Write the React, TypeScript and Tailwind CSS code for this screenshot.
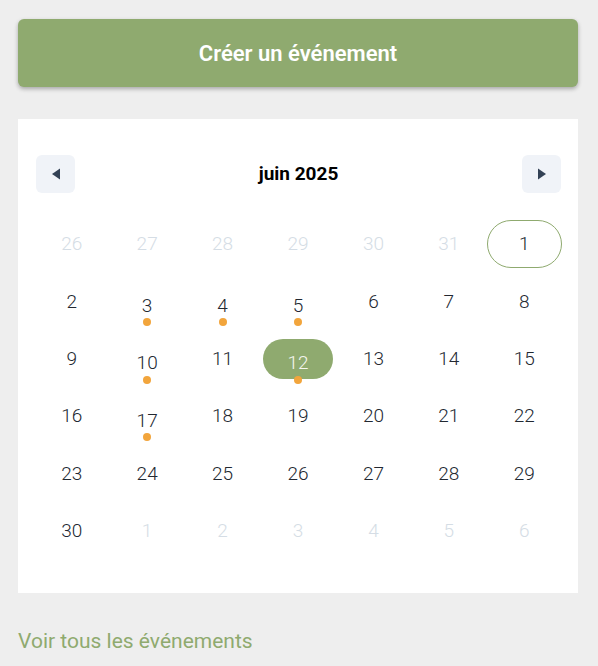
import React from "react";

type Day = { n: number; muted?: boolean; event?: boolean; today?: boolean; selected?: boolean };

const weeks: Day[][] = [
  [
    { n: 26, muted: true },
    { n: 27, muted: true },
    { n: 28, muted: true },
    { n: 29, muted: true },
    { n: 30, muted: true },
    { n: 31, muted: true },
    { n: 1, today: true },
  ],
  [{ n: 2 }, { n: 3, event: true }, { n: 4, event: true }, { n: 5, event: true }, { n: 6 }, { n: 7 }, { n: 8 }],
  [{ n: 9 }, { n: 10, event: true }, { n: 11 }, { n: 12, event: true, selected: true }, { n: 13 }, { n: 14 }, { n: 15 }],
  [{ n: 16 }, { n: 17, event: true }, { n: 18 }, { n: 19 }, { n: 20 }, { n: 21 }, { n: 22 }],
  [{ n: 23 }, { n: 24 }, { n: 25 }, { n: 26 }, { n: 27 }, { n: 28 }, { n: 29 }],
  [
    { n: 30 },
    { n: 1, muted: true },
    { n: 2, muted: true },
    { n: 3, muted: true },
    { n: 4, muted: true },
    { n: 5, muted: true },
    { n: 6, muted: true },
  ],
];

function DayCell({ d }: { d: Day }) {
  const color = d.muted ? "text-[#d5dde5]" : d.selected ? "text-[#f4f6ee]" : "text-[#222831]";
  return (
    <div className="relative flex h-[57.4px] items-center justify-center">
      {d.today && <div className="absolute inset-x-0 top-[4.6px] h-[48px] rounded-full border border-[#8faa6f]" />}
      {d.selected && <div className="absolute left-[3px] right-[3px] top-[9px] h-[40px] rounded-full bg-[#8faa6f]" />}
      <span className={`relative text-[19px] font-light leading-none ${color} ${d.event ? "pt-[9px]" : ""}`}>{d.n}</span>
      {d.event && <span className="absolute left-1/2 top-[46px] h-[8px] w-[8px] -translate-x-1/2 rounded-full bg-[#f2a53c]" />}
    </div>
  );
}

function NavButton({ dir }: { dir: "prev" | "next" }) {
  return (
    <button className="flex h-[38px] w-[39px] items-center justify-center rounded-md bg-[#f0f3f8]">
      <svg width="10" height="12" viewBox="0 0 10 12">
        {dir === "prev" ? <path d="M9 0.5 L1 6 L9 11.5 Z" fill="#334155" /> : <path d="M1 0.5 L9 6 L1 11.5 Z" fill="#334155" />}
      </svg>
    </button>
  );
}

export default function App() {
  return (
    <div className="min-h-[666px] bg-[#eeeeee] pl-[18px] pr-[20px] pt-[19px]" style={{ fontFamily: "Roboto, 'Liberation Sans', sans-serif" }}>
      <button className="flex h-[68px] w-full items-center justify-center rounded-md bg-[#8faa6f] text-[22px] font-semibold text-white shadow-[0_2px_4px_rgba(0,0,0,0.3)]">
        Créer un événement
      </button>

      <div className="mt-[32px] bg-white px-[16px] pb-[34px] pt-[36px]">
        <div className="flex items-center justify-between pl-[2px] pr-[1px]">
          <NavButton dir="prev" />
          <span className="text-[19px] font-bold text-black">juin 2025</span>
          <NavButton dir="next" />
        </div>
        <div className="mt-[22px] grid grid-cols-7">
          {weeks.flat().map((d, i) => (
            <DayCell key={i} d={d} />
          ))}
        </div>
      </div>

      <a className="mt-[34px] block text-[21px] leading-[28px] text-[#8faa6f]">Voir tous les événements</a>
    </div>
  );
}
